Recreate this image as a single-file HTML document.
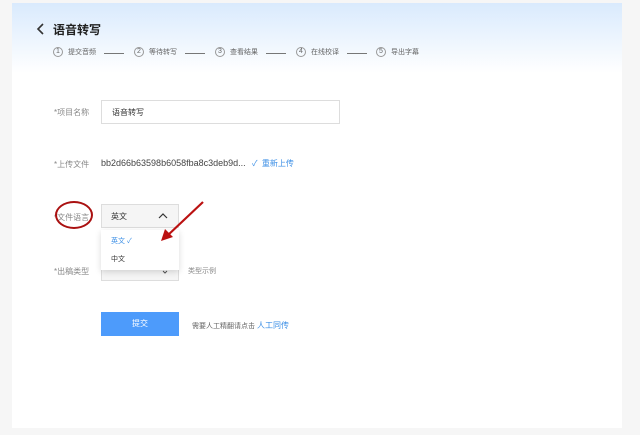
<!DOCTYPE html>
<html><head><meta charset="utf-8"><style>
*{margin:0;padding:0;box-sizing:border-box}
body{width:640px;height:435px;background:#f6f6f6;font-family:"Liberation Sans","Noto Sans CJK SC",sans-serif;position:relative;overflow:hidden;color:#333}
.panel{position:absolute;left:12px;top:3px;width:610px;height:425px;background:#fff}
.hdr{position:absolute;left:12px;top:3px;width:610px;height:70px;background:linear-gradient(#d9eafd,#fff)}
.abs{position:absolute;white-space:nowrap}
.t{font-size:12px;font-weight:bold;color:#222}
.st{font-size:7px;color:#666;display:flex;align-items:center;position:absolute;top:47px}
.c{display:inline-block;width:10px;height:10px;border:1px solid #999;border-radius:50%;font-size:7px;line-height:8px;text-align:center;margin-right:5px}
.ar{position:absolute;top:53px;width:20px;height:1px;background:#777}
.lbl{font-size:8px;color:#888}
.inp{border:1px solid #ddd;background:#fff}
</style></head><body>
<div class="panel"></div>
<div class="hdr"></div>
<svg class="abs" style="left:36px;top:22px" width="10" height="14"><path d="M7 2 L2 7 L7 12" stroke="#333" stroke-width="1.6" fill="none"/></svg>
<div class="abs t" style="left:53px;top:21px">语音转写</div>
<div class="st" style="left:53px"><span class="c">1</span>提交音频</div><div class="ar" style="left:104px"></div>
<div class="st" style="left:134px"><span class="c">2</span>等待转写</div><div class="ar" style="left:185px"></div>
<div class="st" style="left:215px"><span class="c">3</span>查看结果</div><div class="ar" style="left:266px"></div>
<div class="st" style="left:296px"><span class="c">4</span>在线校译</div><div class="ar" style="left:347px"></div>
<div class="st" style="left:376px"><span class="c">5</span>导出字幕</div>
<div class="abs lbl" style="left:54px;top:107px">*项目名称</div>
<div class="abs inp" style="left:101px;top:100px;width:239px;height:24px"></div>
<div class="abs" style="left:112px;top:107px;font-size:8px;color:#333">语音转写</div>
<div class="abs lbl" style="left:54px;top:159px">*上传文件</div>
<div class="abs" style="left:101px;top:158px;font-size:9px;color:#444">bb2d66b63598b6058fba8c3deb9d...</div>
<div class="abs" style="left:252px;top:158px;font-size:8px;color:#3a8ee6">✓ &nbsp;重新上传</div>
<div class="abs lbl" style="left:54px;top:212px">*文件语言</div>
<div class="abs" style="left:55px;top:201px;width:38px;height:28px;border:2.5px solid #a11;border-radius:50%"></div>
<div class="abs inp" style="left:101px;top:204px;width:78px;height:24px;background:#f5f5f5"></div>
<div class="abs" style="left:111px;top:211px;font-size:8px">英文</div>
<svg class="abs" style="left:158px;top:212px" width="10" height="8"><path d="M1 6 L5 2 L9 6" stroke="#333" stroke-width="1.2" fill="none"/></svg>
<div class="abs lbl" style="left:54px;top:266px">*出稿类型</div>
<div class="abs inp" style="left:101px;top:259px;width:78px;height:22px;background:#f5f5f5"></div>
<svg class="abs" style="left:162px;top:270px" width="6" height="4"><path d="M1 1 L3 3 L5 1" stroke="#555" stroke-width="1" fill="none"/></svg>
<div class="abs" style="left:188px;top:266px;font-size:7px;color:#888">类型示例</div>
<div class="abs" style="left:101px;top:230px;width:78px;height:40px;background:#fff;box-shadow:0 2px 6px rgba(0,0,0,.15)"></div>
<div class="abs" style="left:111px;top:236px;font-size:7px;color:#3a8ee6">英文 ✓</div>
<div class="abs" style="left:111px;top:254px;font-size:7px;color:#333">中文</div>
<svg class="abs" style="left:155px;top:198px" width="55" height="50"><path d="M48 4 L12 38" stroke="#b11" stroke-width="2.2"/><path d="M6 43 L10 31 L18 39 Z" fill="#b11"/></svg>
<div class="abs" style="left:101px;top:312px;width:78px;height:24px;background:#4d9bfb;color:#fff;font-size:8px;text-align:center;line-height:24px">提交</div>
<div class="abs" style="left:192px;top:320px;font-size:7px;color:#666">需要人工精翻请点击 <span style="color:#3a8ee6;font-size:8px">人工同传</span></div>
</body></html>
